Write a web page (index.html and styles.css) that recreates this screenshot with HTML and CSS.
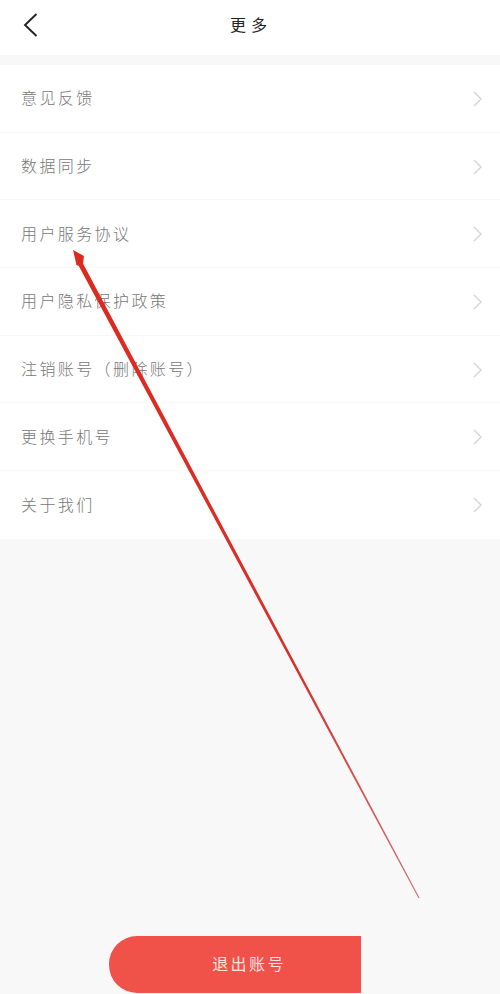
FILE: index.html
```html
<!DOCTYPE html>
<html lang="zh-CN">
<head>
  <meta charset="UTF-8" />
  <meta name="viewport" content="width=device-width, initial-scale=1.0"/>
  <title>更多</title>
  <link rel="stylesheet" href="styles.css">
</head>
<body>

  <header class="topbar">
    <svg class="back-icon" width="15" height="24" viewBox="0 0 15 24">
      <path d="M13.5 1 L2 12 L13.5 23" fill="none" stroke="#222" stroke-width="1.9"/>
    </svg>
    <h1 class="title">更多</h1>
  </header>

  <ul class="menu">
    <li class="menu-item"><span>意见反馈</span><svg class="chevron" width="9" height="16" viewBox="0 0 9 16"><path d="M1 1 L8 8 L1 15" fill="none" stroke="#d4d4d4" stroke-width="1.4"/></svg></li>
    <li class="menu-item"><span>数据同步</span><svg class="chevron" width="9" height="16" viewBox="0 0 9 16"><path d="M1 1 L8 8 L1 15" fill="none" stroke="#d4d4d4" stroke-width="1.4"/></svg></li>
    <li class="menu-item"><span>用户服务协议</span><svg class="chevron" width="9" height="16" viewBox="0 0 9 16"><path d="M1 1 L8 8 L1 15" fill="none" stroke="#d4d4d4" stroke-width="1.4"/></svg></li>
    <li class="menu-item"><span>用户隐私保护政策</span><svg class="chevron" width="9" height="16" viewBox="0 0 9 16"><path d="M1 1 L8 8 L1 15" fill="none" stroke="#d4d4d4" stroke-width="1.4"/></svg></li>
    <li class="menu-item"><span>注销账号（删除账号）</span><svg class="chevron" width="9" height="16" viewBox="0 0 9 16"><path d="M1 1 L8 8 L1 15" fill="none" stroke="#d4d4d4" stroke-width="1.4"/></svg></li>
    <li class="menu-item"><span>更换手机号</span><svg class="chevron" width="9" height="16" viewBox="0 0 9 16"><path d="M1 1 L8 8 L1 15" fill="none" stroke="#d4d4d4" stroke-width="1.4"/></svg></li>
    <li class="menu-item"><span>关于我们</span><svg class="chevron" width="9" height="16" viewBox="0 0 9 16"><path d="M1 1 L8 8 L1 15" fill="none" stroke="#d4d4d4" stroke-width="1.4"/></svg></li>
  </ul>

  <div class="footer">
    <button class="logout">退出账号</button>
  </div>

  <!-- red annotation arrow drawn over the screenshot -->
  <svg class="annotation" width="500" height="994" viewBox="0 0 500 994">
    <defs>
      <linearGradient id="arrowFade" gradientUnits="userSpaceOnUse" x1="73" y1="250" x2="419" y2="898">
        <stop offset="0" stop-color="#dc2a20"/>
        <stop offset="0.65" stop-color="#d9302a"/>
        <stop offset="1" stop-color="#d0707a"/>
      </linearGradient>
    </defs>
    <polygon points="73,250 84,256 83,263.5 419.5,897.7 418.5,898.3 78.8,266 76.5,265" fill="url(#arrowFade)"/>
  </svg>

</body>
</html>
```

FILE: styles.css
```css
* { margin: 0; padding: 0; box-sizing: border-box; }

body {
  font-family: 'Noto Sans CJK SC', 'Liberation Sans', sans-serif;
  background: #f8f8f8;
  width: 500px;
  height: 994px;
  display: flex;
  flex-direction: column;
  position: relative;
  overflow: hidden;
}

.topbar {
  height: 55px;
  padding-bottom: 8px;
  padding-left: 2px;
  background: #fff;
  display: flex;
  align-items: center;
  justify-content: center;
  position: relative;
}

.back-icon {
  position: absolute;
  left: 23px;
  top: 13px;
}

.title {
  font-size: 16px;
  font-weight: 400;
  letter-spacing: 5px;
  color: #222;
}

.menu {
  list-style: none;
  margin-top: 10px;
  background: #fff;
}

.menu-item {
  height: 67.7px;
  padding: 0 18px 2px 21px;
  display: flex;
  align-items: center;
  justify-content: space-between;
  border-bottom: 1px solid #f8f8f8;
  font-size: 16px;
  font-weight: 300;
  letter-spacing: 2.4px;
  color: #777;
}

.menu-item:last-child {
  border-bottom: none;
}

.chevron {
  margin-top: 3px;
}

.footer {
  margin-top: auto;
  padding: 0 0 1px 109px;
}

.logout {
  display: block;
  width: 252px;
  height: 57px;
  padding: 0 0 4px 28px;
  border: none;
  border-radius: 28px 0 0 28px;
  background: #f05249;
  color: #fbe4e2;
  font-family: inherit;
  font-size: 16px;
  font-weight: 400;
  letter-spacing: 2.4px;
}

.annotation {
  position: absolute;
  top: 0;
  left: 0;
}
```
